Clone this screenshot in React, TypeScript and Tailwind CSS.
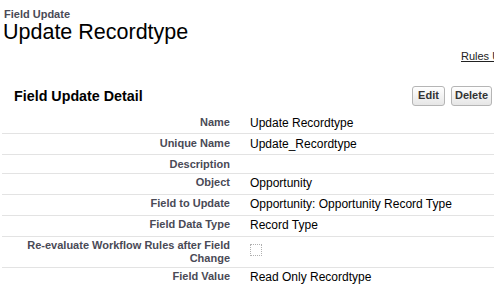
import React from "react";

const rows: { label: string; value?: string; checkbox?: boolean }[] = [
  { label: "Name", value: "Update Recordtype" },
  { label: "Unique Name", value: "Update_Recordtype" },
  { label: "Description", value: "" },
  { label: "Object", value: "Opportunity" },
  { label: "Field to Update", value: "Opportunity: Opportunity Record Type" },
  { label: "Field Data Type", value: "Record Type" },
  { label: "Re-evaluate Workflow Rules after Field Change", checkbox: true },
  { label: "Field Value", value: "Read Only Recordtype" },
];

export default function App() {
  return (
    <div
      className="w-[494px] h-[289px] overflow-hidden bg-white text-black"
      style={{ fontFamily: '"Liberation Sans", Arial, sans-serif' }}
    >
      <div className="pl-[4px] pt-[8px]">
        <div className="text-[11px] leading-[13px] font-bold text-[#4a4a56]">Field Update</div>
        <div className="text-[21.5px] leading-[22px] text-black -ml-[1px]">Update Recordtype</div>
      </div>
      <div className="pl-[461px] mt-[7px] whitespace-nowrap text-[11px] leading-[13px]">
        <a className="text-[#222] underline" href="#">
          Rules Using This Field Update
        </a>
      </div>
      <div className="flex items-center justify-between mt-[22px] pl-[14px] pr-[2px] h-[21px]">
        <div className="text-[14.3px] leading-[16px] font-bold text-black">Field Update Detail</div>
        <div className="flex gap-[6px]">
          <button className="w-[33px] h-[20px] rounded-[3px] border border-[#b5b5b5] bg-gradient-to-b from-white to-[#e6e6e6] text-[11px] font-bold text-[#333] leading-none">
            Edit
          </button>
          <button className="w-[41px] h-[20px] rounded-[3px] border border-[#b5b5b5] bg-gradient-to-b from-white to-[#e6e6e6] text-[11px] font-bold text-[#333] leading-none">
            Delete
          </button>
        </div>
      </div>
      <div className="ml-[2px] mt-[7px]">
        {rows.map((r, i) => (
          <div
            key={r.label}
            className={`flex ${i < rows.length - 1 ? "border-b border-[#e3e3e3]" : ""}`}
          >
            <div className="w-[238px] shrink-0 pr-[10px] pl-[2px] py-[2.5px] text-right text-[11px] leading-[12.5px] font-bold text-[#4a4a56]">
              {r.label}
            </div>
            <div className="pl-[10px] py-[2.5px] text-[12px] leading-[15px] text-black">
              {r.checkbox ? (
                <div className="w-[12px] h-[12px] mt-[5px] border border-dotted border-[#b0b0b0]" />
              ) : (
                r.value
              )}
            </div>
          </div>
        ))}
      </div>
    </div>
  );
}
